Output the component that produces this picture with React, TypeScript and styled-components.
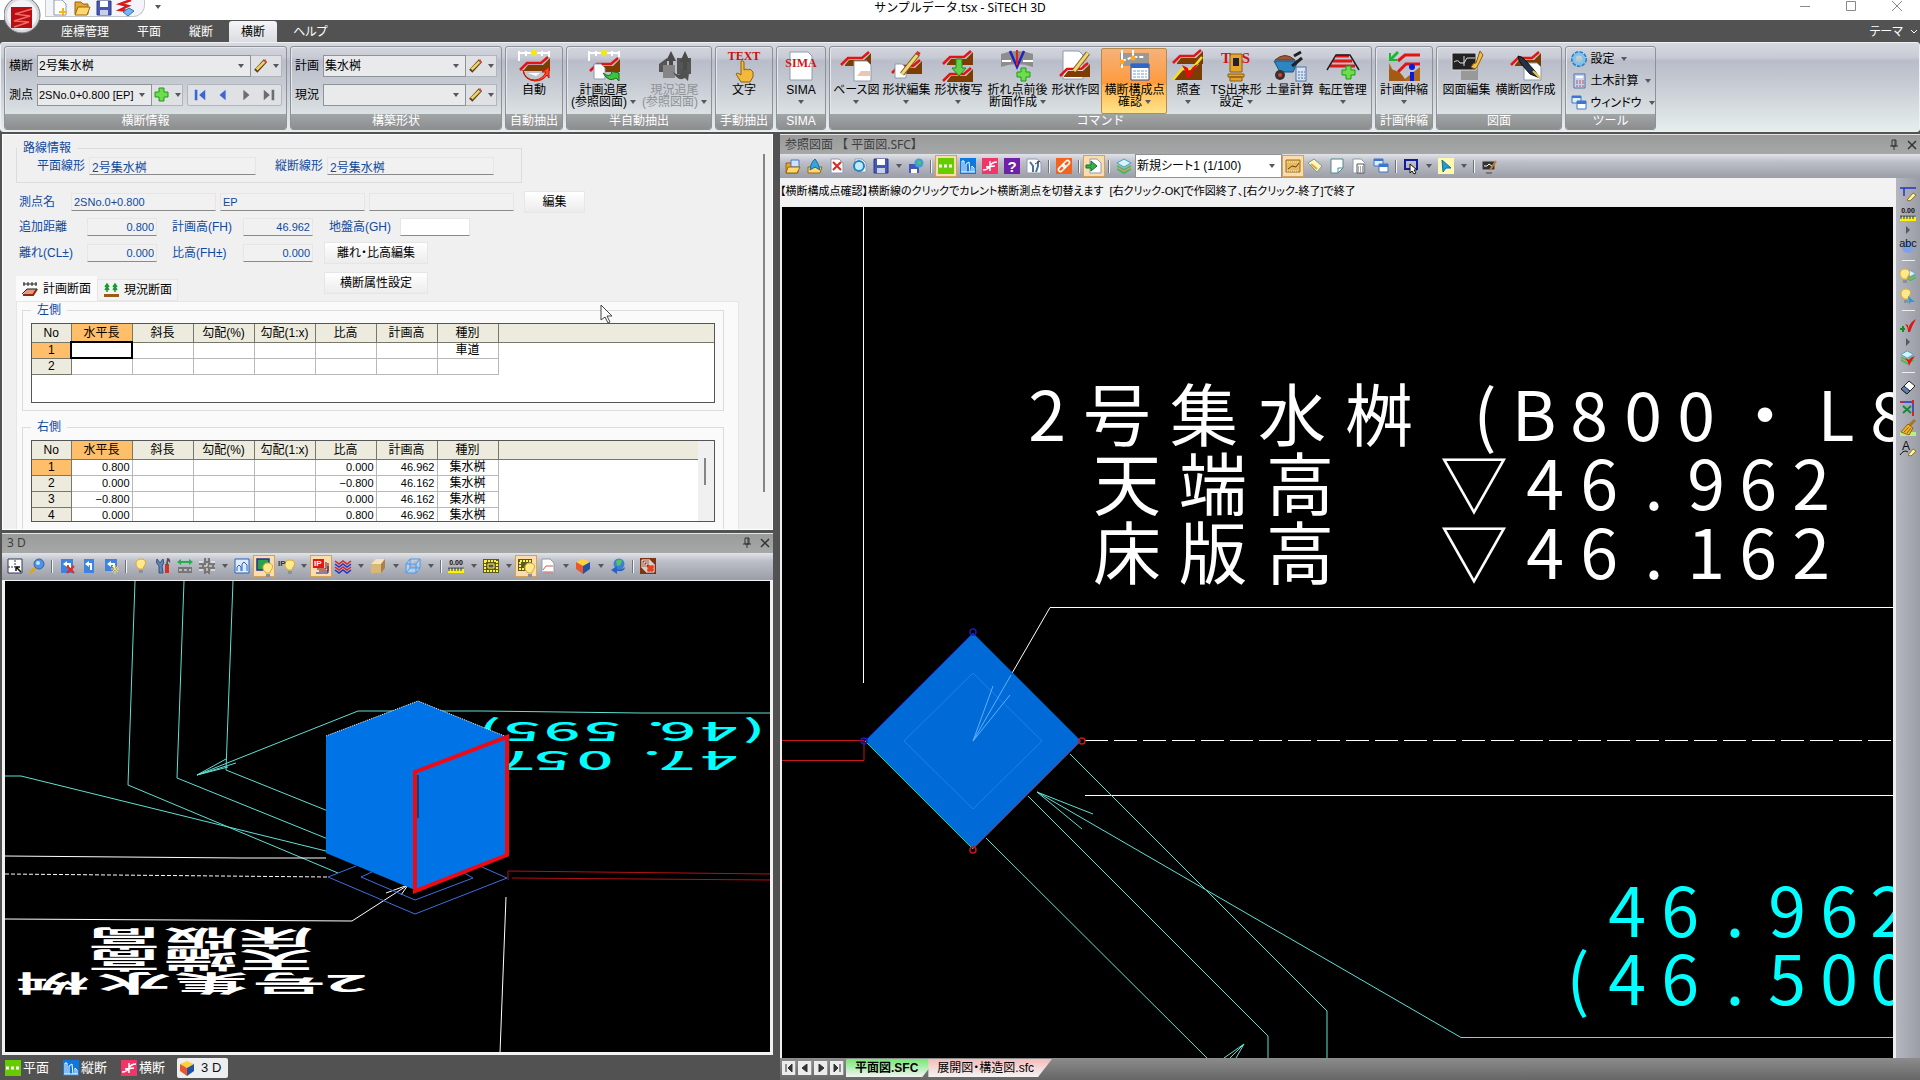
import React from "react";
import styled, { createGlobalStyle, css } from "styled-components";

const Global = createGlobalStyle`
  * { box-sizing: border-box; }
  body {
    margin: 0;
    background: #525252;
    color: #000;
    font: 12px/16px "Liberation Sans", "Noto Sans CJK JP", sans-serif;
    font-feature-settings: "palt";
  }
  button, select, input { font: inherit; font-feature-settings: inherit; color: inherit; }
  button { border: 0; padding: 0; background: none; white-space: nowrap; }
  svg { display: block; flex: none; }
`;

/* ---------- icons ---------- */

const bands = (x: number, y: number, fill = "#7d3c00") => (
  <g transform={`translate(${x} ${y})`}>
    <path d="M5 12 L9 7 H24 L31 0 V13 H5Z" fill={fill} />
    <path d="M1 12 L8 5 H22 L29 -1" fill="none" stroke="#e31414" strokeWidth="2.5" />
  </g>
);
const page = (x: number, y: number, w = 12, h = 14) => (
  <path d={`M${x} ${y}h${w - 4}l4 4v${h - 4}h-${w}z`} fill="#fff" stroke="#8c9bb0" strokeWidth="1" />
);
const plus = (x: number, y: number) => (
  <path d={`M${x + 4} ${y}h5v4h4v5h-4v4h-5v-4h-4v-5h4z`} fill="#6fdc4c" stroke="#1d9a1d" />
);
const ruler = (
  <g>
    <path d="M1 1v10M1 3h30M8 1v5M24 1v5M31 1v6" stroke="#fff" strokeWidth="2" fill="none" />
    <path d="M13 3h6M16 0v6" stroke="#f7ea00" strokeWidth="3" />
  </g>
);
const pencilLine = (a: string) => (
  <g>
    <path d={a} stroke="#7a5a10" strokeWidth="5" />
    <path d={a} stroke="#f3d579" strokeWidth="3" />
  </g>
);

const big: Record<string, React.ReactNode> = {
  auto: <>{ruler}{bands(1, 8)}<path d="M5 20q2 10 12 10 8-1 11-8l-4 0 7-5v11l-2-3q-4 6-12 6-11-1-12-11z" fill="#ff4a2a" stroke="#c81200" /><path d="M10 23h12l-4 3z" fill="#fff" /></>,
  trace: <>{ruler}{bands(1, 9)}{page(6, 14, 11, 15)}<path d="M15 23q6 5 9 0l-2-2 9 2 0 8-3-3q-7 5-13-5z" fill="#3fc43a" stroke="#14701c" /></>,
  traceOff: <><path d="M0 14l8-6v14H0zM18 8h14v16H18z" fill="#555" /><path d="M12 1l5 10h-3v9h-4v-9H7zM26 1l5 11h-3v8h-4v-8h-3z" fill="#4a4a4a" /><rect x="4" y="15" width="12" height="13" fill="#858585" /><path d="M14 22q7 5 9 0l-2-3 9 4-1 8-3-3q-7 4-12-6z" fill="#505050" /></>,
  text: <><text x="16" y="10" textAnchor="middle" fontFamily="Liberation Serif" fontWeight="700" fontSize="12" fill="#c81111">TEXT</text><path d="M13 11q2-1 3 1v8l2-1 2 1 2-1 2 2 1 1v5l-3 5H13l-5-8q1-2 5 1z" fill="#f2b93b" stroke="#91600c" /></>,
  sima: <>{page(5, 2, 22, 28)}<text x="16" y="17" textAnchor="middle" fontFamily="Liberation Serif" fontSize="12" fontWeight="700" fill="#d21616">SIMA</text></>,
  base: <>{bands(0, 3)}{page(14, 11, 17, 20)}<path d="M17 26l4-5h9v5z" fill="#e8c8b4" /></>,
  edit: <>{bands(1, 11)}{page(5, 14, 11, 14)}{pencilLine("M12 24L28 4")}<path d="M27 5l2-3" stroke="#c33" strokeWidth="4" /></>,
  copy: <>{bands(0, 2)}{bands(0, 19)}<path d="M14 9h6v9h4l-7 8-7-8h4z" fill="#5fd24a" stroke="#178f1b" /></>,
  fold: <><path d="M0 4q16-6 32 0v13q-16-6-32 0z" fill="#8d8d8d" /><path d="M1 11h9m12 0h10" stroke="#fff" strokeWidth="2" /><path d="M9 1l7 16 7-16" stroke="#2222bb" strokeWidth="2.5" fill="none" /><path d="M16 0v15" stroke="#d22" strokeWidth="2" />{plus(16, 18)}</>,
  draw: <>{page(4, 1, 20, 28)}{bands(0, 14)}{pencilLine("M15 21L29 3")}</>,
  check: <><path d="M2 3h29v13H2z" fill="#999" /><path d="M4 0v18M15 0v10" stroke="#fff" strokeWidth="2" /><path d="M4 11l11-4 12 0" stroke="#fff" strokeWidth="2" strokeDasharray="4 2" /><circle cx="4" cy="12" r="2.5" fill="#ffa51e" /><circle cx="15" cy="8" r="2.5" fill="#ffa51e" /><path d="M13 14h18v16H13z" fill="#fff" stroke="#2653a6" /><path d="M13 14h18v4H13z" fill="#2e67c8" /><path d="M15 21h14M15 24h14M15 27h14" stroke="#7e9cc8" strokeDasharray="3 1" /></>,
  audit: <>{bands(0, 1)}<path d="M1 30l10-10h10l9-9v19z" fill="#7d3c00" /><path d="M1 30l9-11h10l10-12" stroke="#f2e21a" strokeWidth="2.5" fill="none" /><path d="M10 15l6 3 1 5q3-7 9-9q-5 6-8 14h-3q-1-7-5-13z" fill="#e60c0c" /></>,
  ts: <><path d="M10 4h12v18H10zM8 24h16v3H8zM10 27h12v4H10z" fill="#e5a52c" stroke="#8c5a10" /><rect x="13" y="8" width="6" height="8" fill="#223" /><g fontFamily="Liberation Serif" fontWeight="700" fontSize="15" textAnchor="middle" fill="#d21616"><text x="6 26" y="13">TS</text></g></>,
  barrow: <><path d="M1 10q10-9 20 0z" fill="#9b5632" stroke="#6d381b" /><path d="M0 11h24l-5 11H6z" fill="#2d86c4" stroke="#15517d" /><path d="M18 16L28 8M20 6l7-4" stroke="#222" strokeWidth="3" /><circle cx="6" cy="25" r="5" fill="#333" /><circle cx="6" cy="25" r="2" fill="#e04020" /><rect x="22" y="17" width="10" height="14" fill="#d7e3f5" stroke="#51719f" /><path d="M24 22h7M24 25h7M24 28h7" stroke="#51719f" strokeDasharray="2 1" /></>,
  roll: <><path d="M9 6h13M6 11h19M3 16h25" stroke="#e31414" strokeWidth="3" /><path d="M0 20L9 5h14l9 15" fill="none" stroke="#222" strokeWidth="1.5" />{plus(15, 16)}</>,
  stretch: <><path d="M1 13v18h10zM14 31l18-14v14z" fill="#b06a20" /><path d="M1 19q12 1 17 12H1z" fill="#a35a12" /><path d="M10 11l7-6h15M10 22l8-8h14" fill="none" stroke="#e31414" strokeWidth="3" /><path d="M9 1L3 7V3H1v8h8V9H5l6-6z" fill="#19b82c" /><circle cx="24" cy="17" r="3" fill="#0a18e0" /><path d="M22 22h4v9h-4z" fill="#0a18e0" /></>,
  dwg: <><path d="M10 17h17v13H10z" fill="#999" /><path d="M1 3h24v17H1z" fill="#222" stroke="#ddd" /><path d="M3 12q4-3 6 1h4l3-5h8M13 6v10" stroke="#ddd" fill="none" /><path d="M20 17q3-5 5-4l4-12 3 4-5 10q-2 6-7 2z" fill="#f0c043" stroke="#90581b" /></>,
  section: <>{bands(0, 3)}{page(14, 13, 17, 17)}<path d="M8 6q4 0 8 5l8 9 6 8-10-4-8-9q-4-5-4-9z" fill="#25334a" stroke="#111" /><path d="M23 21l7 7" stroke="#f3cf3c" strokeWidth="2" /></>,
};

const curveTile = (bg: string, body: React.ReactNode) => <><rect width="16" height="16" fill={bg} />{body}</>;
const bulb = (x = 0, y = 0) => (
  <g transform={`translate(${x} ${y})`}>
    <path d="M5 11Q1 8 2 4Q4 0 8 1Q13 2 11 7Q9 9 9 11z" fill="#ffe98a" stroke="#d9a930" />
    <path d="M5 12h4v3H5z" fill="#8b8fa0" />
  </g>
);
const sheets = (c: string) => <><path d="M1 5l7-4 7 4-7 4z" fill="#d8f3fa" stroke={c} /><path d="M1 8l7 4 7-4M1 11l7 4 7-4" fill="none" stroke="#45b86b" strokeWidth="2" /><path d="M1 9l7 4 7-4" fill="none" stroke="#e0a33a" /></>;
const tinyText = (t: string, y: number, size = 8, fill = "#111") => (
  <text x="8" y={y} textAnchor="middle" fontSize={size} fontWeight="700" fontFamily="Liberation Sans" fill={fill}>{t}</text>
);

const small: Record<string, React.ReactNode> = {
  fit: <><path d="M1 1h14v14H1z" fill="#fff" stroke="#333a55" /><path d="M1 9h7V1" stroke="#333a55" strokeDasharray="2 1" fill="none" /><path d="M14 14l-5-5m0 4V9h4" stroke="#111" strokeWidth="1.5" fill="none" /></>,
  zoom: <><path d="M1 15l6-6" stroke="#dba520" strokeWidth="3" /><circle cx="10" cy="6" r="5" fill="#4b93e6" stroke="#3863a5" /><circle cx="9" cy="5" r="2" fill="#c4e2ff" /></>,
  undoX: <><path d="M2 1h12v14H2z" fill="#3e83dd" /><path d="M4 6l4-3v2h4v5h-2V7H8v2z" fill="#fff" /><path d="M8 8l7 7m0-7l-7 7" stroke="#e42b20" strokeWidth="2" /></>,
  undo: <><path d="M3 1h10v14H3z" fill="#3e83dd" /><path d="M4 6l4-3v2h3v7H9V7H8v2z" fill="#fff" /></>,
  undoStar: <><path d="M2 1h12v12H2z" fill="#3e83dd" /><path d="M4 6l4-3v2h4v5h-2V7H8v2z" fill="#fff" /><path d="M12 7v9M8 11h8M9 8l6 6m0-6l-6 6" stroke="#ffd95a" /></>,
  bulb: bulb(1, 0),
  tools: <><path d="M2 1l3 4 3-4q2 4-1 7l1 7H4L4 8Q0 5 2 1z" fill="#5f86b8" stroke="#34547c" /><path d="M10 6h4v9h-4z" fill="#d2322a" /><path d="M12 0q4 0 3 5l-2-2v4h-2z" fill="#555" /></>,
  width: <><path d="M0 4l4-3v2h8V1l4 3-4 3V5H4v2z" fill="#21b04b" /><path d="M1 9h14v6H1z" fill="#777" /><path d="M2 12h12" stroke="#fff" strokeDasharray="3 2" /></>,
  cross: <><path d="M5 0h6v16H5zM0 5h16v6H0z" fill="#777" /><path d="M8 0v16M0 8h16" stroke="#fff" strokeDasharray="3 2" /><path d="M0 4h4M12 4h4M0 12h4M12 12h4" stroke="#fff" /></>,
  house: <><path d="M1 1h14v14H1z" fill="#dcebff" stroke="#2b63b8" /><path d="M3 13V9l2-2 2 2v4M8 13V6l2-2 3 3v6" stroke="#2b63b8" fill="none" /></>,
  layerBulb: <><path d="M1 1h12v11H1z" fill="#2aa14a" stroke="#1d2f8f" strokeWidth="1.5" />{bulb(5, 4)}</>,
  ipBulb: <>{bulb(5, 1)}<text x="0" y="8" fontSize="8" fontWeight="700" fill="#333">IP</text></>,
  ipRed: <><path d="M6 13h9V5M4 11h9V4" stroke="#7a1010" fill="none" /><path d="M0 1h11v9H0z" fill="#e41616" /><path d="M3 15h12V8" stroke="#1522aa" fill="none" /><text x="1" y="8" fontSize="8" fontWeight="700" fill="#fff">IP</text></>,
  waves: <><path d="M0 3l4 3 4-3 4 3 4-3M0 9l4 3 4-3 4 3 4-3" stroke="#d22" fill="none" strokeWidth="1.5" /><path d="M0 6l4 3 4-3 4 3 4-3M0 12l4 3 4-3 4 3 4-3" stroke="#2233cc" fill="none" strokeWidth="1.5" /></>,
  box: <><path d="M1 6l5-5h9l-4 5z" fill="#f4e2b8" /><path d="M1 6h10v9H1z" fill="#d9b876" /><path d="M11 6l4-5v9l-4 5z" fill="#a8824a" /></>,
  wire: <path d="M1 6l4-5h10v9l-4 5H1zM1 6h10l4-5M11 6v9M5 1v9h10M5 10l-4 5" fill="#bfe0ff" fillOpacity=".6" stroke="#4a9be8" />,
  dim: <>{tinyText("0.00", 7, 7)}<path d="M0 9h16v6H0z" fill="#fff200" /><path d="M0 10h16M1 10v3m3-3v3m3-3v3m3-3v3m3-3v3" stroke="#1c2ba0" /></>,
  film: <><path d="M0 1h16v14H0z" fill="#5a5a28" /><path d="M2 3h12v10H2z" fill="none" stroke="#fff23a" strokeDasharray="2 1" strokeWidth="2" /><path d="M5 6h6v4H5z" fill="#555" stroke="#fff23a" /></>,
  filmBulb: <><path d="M0 1h14v12H0z" fill="#5a5a28" /><path d="M2 3h10v8H2z" fill="none" stroke="#fff23a" strokeDasharray="2 1" strokeWidth="2" />{bulb(5, 4)}</>,
  sheetRed: <>{page(2, 1, 12, 14)}<path d="M3 12l3-4h7M3 14h10" stroke="#cf5a4a" fill="none" /></>,
  cube: <><path d="M1 4l7-3 7 3-7 4z" fill="#ffd23c" /><path d="M1 4l7 4v8l-7-5z" fill="#e8582c" /><path d="M15 4L8 8v8l7-5z" fill="#2353a8" /></>,
  globe: <><circle cx="9" cy="6" r="5.5" fill="#3f7fd6" /><path d="M6 3q4-3 6 0-1 5-5 5z" fill="#4fc65b" /><path d="M15 9q0 5-8 4v3l-6-4 6-4v3q5 1 8-2z" fill="#2a63c8" /></>,
  stackX: <><path d="M0 0h16v16H0z" fill="#7c3412" /><path d="M2 2h8v8H2zM4 4h8v8H4zM6 6h8v8H6z" fill="#7c3412" stroke="#fff" /><path d="M8 8l5 5m0-5l-5 5" stroke="#f03a20" strokeWidth="3" /></>,
  folder: <><path d="M1 5h5l1 2h6v8H1z" fill="#e5a52e" stroke="#976711" /><path d="M6 2h8v7H6z" fill="#cfe2ff" stroke="#4a79bd" /><path d="M3 9h12l-3 6H1z" fill="#ffd970" stroke="#976711" /></>,
  folderUp: <><path d="M1 9h14l-2 6H1z" fill="#ffd970" stroke="#976711" /><path d="M3 12q1-8 5-11 3 3 5 11l-5-3z" fill="#35a5dc" stroke="#176b9c" /></>,
  docX: <>{page(2, 1, 12, 14)}<path d="M4 4l8 8m0-8l-8 8" stroke="#e0261c" strokeWidth="2" /></>,
  docZoom: <>{page(4, 1, 11, 13)}<circle cx="8" cy="8" r="5" fill="#bfeaff" stroke="#2383bd" strokeWidth="2" /></>,
  save: <><path d="M1 1h14v14H1z" fill="#4658b5" stroke="#2c3a86" /><path d="M4 1h8v6H4z" fill="#fff" /><path d="M4 10h8v5H4z" fill="#c9cfe8" /></>,
  saveWeb: <><path d="M1 6h10v9H1z" fill="#4658b5" /><path d="M3 11h6v4H3z" fill="#fff" /><circle cx="11" cy="5" r="4.5" fill="#3f9fd6" /><path d="M9 3q4-2 4 3l-3 1z" fill="#4fc65b" /></>,
  plan: curveTile("#66cc00", <path d="M1 8h14" stroke="#fff" strokeWidth="3" strokeDasharray="3 2" />),
  profile: curveTile("#0c78e0", <path d="M1 14h14M2 14V3h2v11M6 14V6l3-2 1 10M12 14V8l2 2v4" stroke="#fff" fill="none" />),
  xsec: curveTile("#f23568", <path d="M1 12q5 0 7-4t7-4M8 3v10M4 9l9-1" stroke="#fff" fill="none" strokeWidth="1.5" />),
  help: curveTile("#6f1fa8", tinyText("?", 14, 15, "#fff")),
  toolDoc: <>{page(1, 1, 14, 14)}<path d="M4 4l3 4v6M12 3v5l-2 6" stroke="#4a6fa3" strokeWidth="2" fill="none" /><path d="M9 6l5-3" stroke="#444" /></>,
  link: curveTile("#f4631e", <g transform="rotate(-45 8 8)" stroke="#fff" strokeWidth="1.5"><rect x="1" y="6" width="8" height="4" rx="2" /><rect x="7" y="6" width="8" height="4" rx="2" /></g>),
  docIn: <>{page(4, 1, 11, 14)}<path d="M0 7h5V3l6 5-6 5v-3H0z" fill="#30b34a" stroke="#15702a" /></>,
  layers: sheets("#3ba4c6"),
  grid: <><path d="M1 2h14v12H1z" fill="#e8b85a" stroke="#8f7232" /><path d="M3 11l4-3 4 1 3-4" stroke="#5b4a1a" fill="none" /><path d="M2 4h12M2 13h12" stroke="#fff6c0" strokeDasharray="1 1" /></>,
  note: <><path d="M1 5l6-4 8 7-5 6z" fill="#fff7bd" stroke="#7a9c80" /><path d="M4 6l6 5" stroke="#e0a33a" strokeWidth="2" /></>,
  sheet: <path d="M2 1h12v9l-5 5H2zM9 15v-5h5" fill="#fff" stroke="#4e8a8a" />,
  calcDoc: <>{page(2, 1, 12, 14)}<path d="M6 6h7v9H6z" fill="#fff" stroke="#555" /><path d="M7 9h5M7 11h5M7 13h5" stroke="#555" strokeDasharray="1 1" /></>,
  windows: <><path d="M1 1h9v7H1z" fill="#dfeeff" stroke="#3b77cc" /><path d="M6 6h9v8H6z" fill="#fff" stroke="#3b77cc" /><path d="M1 1h9v2H1zM6 6h9v3H6z" fill="#3b77cc" /></>,
  select: <><path d="M2 2h12v9H2z" fill="none" stroke="#101c9c" strokeWidth="2" /><path d="M7 6v9l2-2 2 3 2-1-2-3h3z" fill="#fff" stroke="#111" /></>,
  pick: <><path d="M0 0h16v16H0z" fill="#fff9b0" /><path d="M4 2l9 8H8l-3 4z" fill="#1f9ddb" stroke="#146b9c" /></>,
  board: <><path d="M1 3h13v9H1z" fill="#333" stroke="#bbb" /><path d="M3 8h3l2-2 4 3" stroke="#fff" fill="none" /><path d="M9 12l6-9" stroke="#c57a32" strokeWidth="2" /><path d="M5 15h6" stroke="#777" strokeWidth="2" /></>,
  linePen: <><path d="M0 2h16M4 2v8" stroke="#2033c8" strokeWidth="1.5" /><path d="M7 14l6-7 3 2-6 6z" fill="#fff3a0" stroke="#8c7420" /></>,
  abc: <><circle cx="8" cy="9" r="6" fill="#7da2e6" /><text x="8" y="9" textAnchor="middle" fontSize="11" fill="#111">abc</text></>,
  bulbLayers: <><g transform="translate(5 2) scale(.7)">{sheets("#3ba4c6")}</g>{bulb(-2, 0)}</>,
  bulbPick: <>{bulb(-1, 0)}<path d="M8 8l7 6h-4l-2 2z" fill="#2b9bd6" /></>,
  checkPlus: <><path d="M5 6l3 1 0 4q2-7 8-10-4 7-6 13H8q0-5-3-8z" fill="#e31414" /><path d="M0 11h5M3 8v6" stroke="#178f1b" strokeWidth="2" /></>,
  checkLayers: <><g transform="scale(.9)">{sheets("#3ba4c6")}</g><path d="M5 8l4 2q2-3 6-4-4 5-6 10Q8 11 5 8z" fill="#e31414" /></>,
  eraser: <><path d="M1 9l8-8 6 5-8 8z" fill="#fff" stroke="#222" /><path d="M4 6l6 5-3 3-6-5z" fill="#5c7fb0" stroke="#222" /></>,
  cut: <><path d="M0 2h13v12" stroke="#2033c8" fill="none" strokeWidth="1.5" /><path d="M3 6l8 7m0-7l-8 7" stroke="#158a34" strokeWidth="2" /><path d="M0 2h3m10-2v4m0 8v4" stroke="#d22" strokeWidth="2" /></>,
  broom: <><path d="M0 12h16v4H0z" fill="#b5f088" /><path d="M15 0L9 6" stroke="#a87622" strokeWidth="3" /><path d="M8 4l5 4-4 7-8-3z" fill="#f4b327" stroke="#8d6312" /><path d="M4 12l5-5M7 13l4-5" stroke="#8d6312" /></>,
  letterPen: <><text x="6" y="10" textAnchor="middle" fontSize="12" fill="#111">A</text><path d="M0 15q4-6 8-3" stroke="#111" fill="none" /><path d="M8 15l5-6 3 2-5 5z" fill="#fff3a0" stroke="#8c7420" /></>,
  pencil: <><path d="M2 14L13 2" stroke="#5b431a" strokeWidth="5" /><path d="M3 12L12 3" stroke="#f0cf63" strokeWidth="3" /><path d="M12 3l2-1" stroke="#c5504a" strokeWidth="4" /></>,
  plus: <g transform="translate(1 1)">{plus(0, 0)}</g>,
  first: <><path d="M2 2h3v12H2zM14 2v12L7 8z" fill="#3a68d0" /></>,
  prev: <path d="M11 2v12L4 8z" fill="#3a68d0" />,
  next: <path d="M5 2v12l7-6z" fill="#6a6d72" />,
  last: <path d="M2 2v12l7-6zM11 2h3v12h-3z" fill="#6a6d72" />,
  gear: <><circle cx="8" cy="8" r="6" fill="none" stroke="#2d7fc0" strokeWidth="4" strokeDasharray="3 1" /><circle cx="8" cy="8" r="5" fill="none" stroke="#7cc4ee" strokeWidth="3" /></>,
  calc: <><path d="M3 1h11v14H3z" fill="#c4d5f2" stroke="#5172ab" /><path d="M5 3h7v2H5z" fill="#fff" /><path d="M5 8h8M5 10h8M5 13h8" stroke="#c05050" strokeDasharray="2 1" /></>,
  newDoc: <>{page(2, 0, 12, 15)}<path d="M11 8v8M7 12h8" stroke="#f6b31d" strokeWidth="2" /></>,
  open: <><path d="M1 2h6l2 2h5v10H1z" fill="#e5a52e" stroke="#976711" /><path d="M4 7h12l-3 8H1z" fill="#ffd970" stroke="#976711" /></>,
  logo: <><path d="M13 0L2 4l8 2-8 4 9 1" stroke="#d81c1c" strokeWidth="2.5" fill="none" /><path d="M5 12l6-4 5 3-6 5z" fill="#78b7f0" stroke="#3170b8" /></>,
  tabPlan: <><path d="M4 8h12l-4 6H1z" fill="#e8977c" /><path d="M1 3h14M2 1v4m4-4v4m4-4v4m4-4v4" stroke="#222" fill="none" /><path d="M0 13l5-5h10" stroke="#222" fill="none" /><path d="M1 14h10l4-6" stroke="#8a2a12" strokeWidth="2" fill="none" /></>,
  tabNow: <><path d="M1 12h15v3H1z" fill="#9a5a18" /><path d="M4 10V3m-2 2l2-3 2 3M2 8l2-3 2 3M12 10V3m-2 2l2-3 2 3m-4 3l2-3 2 3" stroke="#159a2c" fill="none" strokeWidth="1.5" /></>,
};

const Icon = ({ name, size = 16 }: { name: string; size?: number }) => (
  <svg width={size} height={size} viewBox={size === 32 ? "0 0 32 32" : "0 0 16 16"} fill="none" overflow="visible" aria-hidden="true">
    {size === 32 ? big[name] : small[name]}
  </svg>
);
const Arrow = () => (
  <svg width="6" height="4" viewBox="0 0 6 4" aria-hidden="true"><path d="M0 0h6L3 4z" fill="#55585e" /></svg>
);
const Pin = () => (
  <svg width="10" height="12" viewBox="0 0 10 12" aria-hidden="true"><path d="M3 1h4v6H3zM1 7h8M5 7v4M6 1v6" fill="none" stroke="#333" /></svg>
);
const Cross = () => (
  <svg width="10" height="10" viewBox="0 0 10 10" aria-hidden="true"><path d="M1 1l8 8M9 1l-8 8" stroke="#333" strokeWidth="1.5" /></svg>
);

/* ---------- window frame ---------- */

const Window = styled.div`
  position: relative;
  display: flex;
  flex-direction: column;
  height: 100vh;
  overflow: hidden;
`;
const TitleBar = styled.header`
  display: grid;
  grid-template-columns: 1fr auto 1fr;
  height: 20px;
  background: #fff;
`;
const QuickBar = styled.div`
  display: flex;
  align-items: flex-start;
  gap: 10px;
  padding-left: 45px;
`;
const QuickPill = styled.div`
  display: flex;
  align-items: flex-start;
  gap: 6px;
  height: 17px;
  padding: 0 10px 0 6px;
  border: 1px solid #c3c7cf;
  border-top: 0;
  border-radius: 0 0 12px 0;
  background: #f4f5f8;
`;
const QuickMore = styled.button`
  padding-top: 5px;
`;
const Title = styled.h1`
  margin: 0;
  font: 12px/16px "Noto Sans", "Noto Sans CJK JP", sans-serif;
`;
const WinControls = styled.div`
  display: flex;
  justify-content: flex-end;
  gap: 34px;
  padding-right: 17px;
  button { height: 12px; }
`;
const Orb = styled.button`
  position: absolute;
  left: 4px;
  top: -3px;
  width: 37px;
  height: 37px;
  border-radius: 50%;
`;
const MenuBar = styled.nav`
  display: flex;
  align-items: flex-end;
  gap: 4px;
  height: 22px;
  padding-left: 49px;
  background: #525252;
`;
const MenuTab = styled.button<{ $active?: boolean }>`
  height: 21px;
  padding: 0 12px;
  color: #fff;
  ${(p) => p.$active && css`
    color: #000;
    border-radius: 3px 3px 0 0;
    background: linear-gradient(#f4f5f7, #d9dce2);
  `}
`;
const ThemeButton = styled(MenuTab)`
  display: flex;
  align-items: center;
  gap: 8px;
  margin-left: auto;
  padding-right: 3px;
`;

/* ---------- ribbon ---------- */

const Ribbon = styled.div`
  display: flex;
  gap: 3px;
  height: 90px;
  margin: 0 0 2px;
  padding: 3px 3px 1px;
  border: 1px solid #eef0f2;
  border-radius: 3px;
  background: linear-gradient(#d6d9df 0, #c9ccd6 14px, #b9bdca 18px, #c6cad2 40px, #e6eeed 88px);
`;
const GroupBox = styled.section<{ $w: number }>`
  display: flex;
  flex-direction: column;
  flex: 0 0 ${(p) => p.$w}px;
  border: 1px solid #8e9298;
  border-radius: 3px;
  box-shadow: inset 1px 1px 0 #e4e7ec;
  overflow: hidden;
`;
const GroupBody = styled.div`
  display: flex;
  flex: 1;
  justify-content: center;
  gap: 1px;
  padding: 1px 1px 0;
`;
const GroupName = styled.h2`
  margin: 0;
  height: 15px;
  background: linear-gradient(#a2a5a6, #8c8e8e);
  color: #fff;
  font: 12px/14px "Liberation Sans", "Noto Sans CJK JP", sans-serif;
  text-align: center;
`;
const CommandButton = styled.button<{ $w: number; $active?: boolean }>`
  display: flex;
  flex-direction: column;
  align-items: center;
  flex: 0 0 ${(p) => p.$w}px;
  padding-top: 1px;
  border: 1px solid transparent;
  border-radius: 2px;
  line-height: 12px;
  &:disabled { color: #8e9196; }
  ${(p) => p.$active && css`
    border-color: #b58a4c;
    background: linear-gradient(#f6b27a, #ff9a3c 35px, #ffb450 36px, #ffe487);
  `}
`;
const CommandLabel = styled.span`
  display: flex;
  flex-direction: column;
  align-items: center;
  margin-top: 2px;
`;
const CommandLine = styled.span`
  display: flex;
  align-items: center;
  justify-content: center;
  gap: 3px;
  height: 12px;
`;
const FieldStack = styled.div`
  display: flex;
  flex: 1;
  flex-direction: column;
  gap: 7px;
  padding: 7px 3px 0;
`;
const FieldLine = styled.div`
  display: flex;
  align-items: center;
  height: 22px;
`;
const FieldLabel = styled.label`
  flex: 0 0 28px;
`;
const Combo = styled.span<{ $light?: boolean; $fixed?: number; $small?: boolean }>`
  display: grid;
  grid-template-columns: minmax(0, 1fr) 18px;
  align-items: center;
  flex: ${(p) => (p.$fixed ? `0 0 ${p.$fixed}px` : "1")};
  height: 100%;
  border: 1px solid #8f9398;
  background: ${(p) => (p.$light ? "#fff" : "#e9eaec")};
  font-size: ${(p) => (p.$small ? 11 : 12)}px;
  select {
    grid-area: 1 / 1 / 2 / 3;
    height: 100%;
    min-width: 0;
    padding: 0 0 0 1px;
    border: 0;
    background: none;
    appearance: none;
  }
  svg { grid-area: 1 / 2 / 2 / 3; justify-self: center; pointer-events: none; }
`;
const SplitButton = styled.button`
  display: flex;
  align-items: center;
  justify-content: center;
  gap: 5px;
  flex: 0 0 31px;
  height: 100%;
  border: 1px solid #b2b5bb;
  border-left: 0;
  background: #dfe1e5;
`;
const NavStrip = styled.div`
  display: flex;
  flex: 1;
  height: 100%;
  margin-left: 4px;
  border: 1px solid #b2b5bb;
  border-radius: 2px;
  background: #dfe1e5;
  button { display: flex; flex: 1; align-items: center; justify-content: center; }
`;
const ToolList = styled.div`
  display: flex;
  flex: 1;
  flex-direction: column;
  gap: 6px;
  padding: 3px 0 0 5px;
  button { display: flex; align-items: center; gap: 3px; height: 16px; }
  svg:last-child { margin-left: 4px; }
`;

type Cmd = { icon: string; w: number; l1: string; l2?: string; menu?: boolean; active?: boolean; off?: boolean };
const Command = ({ icon, w, l1, l2, menu, active, off }: Cmd) => (
  <CommandButton $w={w} $active={active} disabled={off}>
    <Icon name={icon} size={32} />
    <CommandLabel>
      <CommandLine>{l1}</CommandLine>
      <CommandLine>{l2}{menu && <Arrow />}</CommandLine>
    </CommandLabel>
  </CommandButton>
);
const groups: { name: string; w: number; items: Cmd[] }[] = [
  { name: "自動抽出", w: 58, items: [{ icon: "auto", w: 50, l1: "自動" }] },
  { name: "半自動抽出", w: 146, items: [
    { icon: "trace", w: 70, l1: "計画追尾", l2: "(参照図面)", menu: true },
    { icon: "traceOff", w: 70, l1: "現況追尾", l2: "(参照図面)", menu: true, off: true }] },
  { name: "手動抽出", w: 58, items: [{ icon: "text", w: 50, l1: "文字" }] },
  { name: "SIMA", w: 50, items: [{ icon: "sima", w: 44, l1: "SIMA", menu: true }] },
  { name: "コマンド", w: 543, items: [
    { icon: "base", w: 48, l1: "ベース図", menu: true },
    { icon: "edit", w: 50, l1: "形状編集", menu: true },
    { icon: "copy", w: 52, l1: "形状複写", menu: true },
    { icon: "fold", w: 64, l1: "折れ点前後", l2: "断面作成", menu: true },
    { icon: "draw", w: 50, l1: "形状作図" },
    { icon: "check", w: 66, l1: "横断構成点", l2: "確認", menu: true, active: true },
    { icon: "audit", w: 40, l1: "照査", menu: true },
    { icon: "ts", w: 52, l1: "TS出来形", l2: "設定", menu: true },
    { icon: "barrow", w: 52, l1: "土量計算" },
    { icon: "roll", w: 52, l1: "転圧管理", menu: true }] },
  { name: "計画伸縮", w: 58, items: [{ icon: "stretch", w: 52, l1: "計画伸縮", menu: true }] },
  { name: "図面", w: 126, items: [
    { icon: "dwg", w: 52, l1: "図面編集" },
    { icon: "section", w: 64, l1: "横断図作成" }] },
];

/* ---------- docked panes ---------- */

const Workspace = styled.main`
  display: grid;
  grid-template-columns: minmax(0, 155fr) minmax(0, 228fr);
  gap: 5px;
  flex: 1;
  min-height: 0;
`;
const LeftColumn = styled.div`
  display: grid;
  grid-template-rows: minmax(0, 396fr) minmax(0, 523fr) 22px;
  gap: 3px 0;
  min-height: 0;
`;
const RightColumn = styled.section`
  display: flex;
  flex-direction: column;
  min-width: 0;
  min-height: 0;
`;
const PaneHead = styled.div`
  display: flex;
  align-items: center;
  gap: 8px;
  flex: 0 0 20px;
  height: 20px;
  padding: 0 3px 0 5px;
  border-top: 1px solid #e4e4e4;
  background: linear-gradient(#9a9c9b, #a6a8a7);
  color: #3c3e40;
  h2 { margin: 0; flex: 1; font: 12px/18px "Noto Sans", "Noto Sans CJK JP", sans-serif; }
`;
const Toolbar = styled.div<{ $h: number }>`
  display: flex;
  align-items: center;
  flex: 0 0 ${(p) => p.$h}px;
  padding: 0 2px;
  background: linear-gradient(#e2e3e9, #bcbfc8 8px, #9b9ea7);
`;
const ToolButton = styled.button<{ $active?: boolean }>`
  display: flex;
  align-items: center;
  justify-content: center;
  flex: 0 0 22px;
  height: 22px;
  ${(p) => p.$active && css`
    border: 1px solid #d3a25c;
    background: #fbdcae;
  `}
`;
const MenuArrow = styled.button`
  display: flex;
  align-items: center;
  justify-content: center;
  flex: 0 0 13px;
  height: 22px;
`;
const Divider = styled.span`
  flex: 0 0 2px;
  height: 13px;
  margin: 0 3px;
  border-left: 1px solid #6f727a;
  background: #f2f3f5;
`;
/* "!" marks a pressed tool, "v" a menu arrow, "|" a divider */
const Tools = ({ list }: { list: string }) => (
  <>
    {list.split(" ").map((t, i) =>
      t === "|" ? <Divider key={i} /> :
      t === "v" ? <MenuArrow key={i} aria-label="menu"><Arrow /></MenuArrow> :
      <ToolButton key={i} $active={t[0] === "!"} aria-label={t.replace("!", "")}><Icon name={t.replace("!", "")} /></ToolButton>
    )}
  </>
);

/* ---------- station form ---------- */

const FormPane = styled.section`
  position: relative;
  display: grid;
  grid-template-columns: minmax(0, 1fr) 7px;
  gap: 0 24px;
  min-height: 0;
  margin: 0 2px;
  padding: 5px 2px 0 13px;
  border: 1px solid #fff;
  background: #f0f0f0;
  color: #104a9c;
  overflow: hidden;
`;
const FormBody = styled.div`
  min-width: 0;
`;
const PaneScroll = styled.div`
  width: 2px;
  height: 338px;
  margin-top: 14px;
  background: #858585;
`;
const Fieldset = styled.fieldset<{ $w?: string; $pad: string }>`
  width: ${(p) => p.$w || "auto"};
  min-width: 0;
  margin: 0;
  padding: ${(p) => p.$pad};
  border: 1px solid #dcdcdc;
  legend { padding: 0 6px; line-height: 16px; }
`;
const FormLine = styled.div`
  display: flex;
  align-items: center;
`;
const RouteLine = styled(FormLine)`
  padding-left: 20px;
`;
const FormGrid = styled.div`
  display: grid;
  grid-template-columns: 68px 70px 15px 71px 70px 11px 76px 70px;
  grid-auto-rows: 26px;
  align-items: center;
  padding: 1px 0 0 3px;
`;
const Label = styled.label<{ $w?: number; $indent?: number }>`
  flex: 0 0 ${(p) => p.$w || 52}px;
  padding-left: ${(p) => p.$indent || 0}px;
  white-space: nowrap;
`;
const Field = styled.input<{ $w: number; $right?: boolean; $blank?: boolean }>`
  width: ${(p) => p.$w}px;
  height: 18px;
  padding: 0 2px;
  border: 1px solid #e6e6e6;
  border-bottom-color: #8a8a8a;
  border-radius: 0;
  background: ${(p) => (p.$blank ? "#fff" : "#f1f1f1")};
  font-size: ${(p) => (p.$right ? 11 : 12)}px;
  text-align: ${(p) => (p.$right ? "right" : "left")};
`;
const StationLine = styled(FormLine)`
  gap: 4px;
  margin-top: 8px;
  padding-left: 3px;
  input { font-size: 11px; }
  button { margin-left: 6px; }
`;
const PushButton = styled.button<{ $w: number }>`
  width: ${(p) => p.$w}px;
  height: 22px;
  border: 1px solid #e6e6e6;
  background: linear-gradient(#fff, #ececec);
  color: #000;
`;
const ButtonCell = styled.div`
  grid-column: 7 / 9;
`;
const TabLine = styled.div`
  display: flex;
  align-items: flex-start;
  justify-content: flex-start;
  height: 29px;
  margin-top: 6px;
`;
const TabList = styled.div`
  display: flex;
  align-items: flex-end;
  flex: 0 0 308px;
  height: 29px;
`;
const SheetTab = styled.button<{ $active?: boolean }>`
  display: flex;
  align-items: center;
  gap: 5px;
  height: ${(p) => (p.$active ? 25 : 22)}px;
  padding: 0 5px;
  border: 1px solid ${(p) => (p.$active ? "#fafafa" : "#e6e6e6")};
  background: ${(p) => (p.$active ? "#fafafa" : "#f3f3f3")};
  color: #000;
`;
const TabPage = styled.div`
  display: flex;
  flex-direction: column;
  gap: 8px;
  padding: 0 14px 8px 5px;
  border: 1px solid #e6e6e6;
  background: #fafafa;
`;
const GridFrame = styled.div<{ $h: number }>`
  display: flex;
  height: ${(p) => p.$h}px;
  border: 1px solid #555;
  background: #fff;
  overflow: hidden;
`;
const GridScroll = styled.div`
  flex: 0 0 16px;
  padding: 17px 6px 0;
  background: #f0f0f0;
  &::after { content: ""; display: block; width: 2px; height: 27px; background: #858585; }
`;
const Grid = styled.table`
  width: 100%;
  table-layout: fixed;
  border-collapse: collapse;
  align-self: flex-start;
  color: #000;
  th, td { height: 16px; padding: 0 2px; line-height: 14px; font-weight: 400; overflow: hidden; white-space: nowrap; }
  th { background: #ecebdd; border: 1px solid #77776a; text-align: center; }
  td { font-size: 11px; border: 1px solid #b8b8b8; text-align: right; }
  tr > :first-child { border-left: 0; }
  thead th { height: 18px; border-top: 0; padding: 0; }
  thead th:last-child { border-right: 0; }
  tbody td:last-child { border: 0; }
  tbody td:nth-last-child(2) { text-align: center; font-size: 12px; }
`;
const HotTh = styled.th`
  && { background: #ffbe69; }
`;
const CurrentTd = styled.td`
  outline: 2px solid #000;
  outline-offset: -1px;
`;

const heads = ["No", "水平長", "斜長", "勾配(%)", "勾配(1:x)", "比高", "計画高", "種別"];
const DataGrid = ({ rows, cursor, name }: { rows: string[][]; cursor?: boolean; name: string }) => (
  <Grid aria-label={name}>
    <colgroup>
      <col style={{ width: 39 }} />
      {heads.slice(1).map((h) => <col key={h} style={{ width: 61 }} />)}
      <col />
    </colgroup>
    <thead>
      <tr>
        {heads.map((h, i) => (i === 1 ? <HotTh key={h}>{h}</HotTh> : <th key={h}>{h}</th>))}
        <th />
      </tr>
    </thead>
    <tbody>
      {rows.map((r, i) => (
        <tr key={i}>
          {i === 0 ? <HotTh>1</HotTh> : <th>{i + 1}</th>}
          {r.map((c, j) => (cursor && i === 0 && j === 0 ? <CurrentTd key={j} /> : <td key={j}>{c}</td>))}
          <td />
        </tr>
      ))}
    </tbody>
  </Grid>
);
const leftRows = [["", "", "", "", "", "", "車道"], ["", "", "", "", "", "", ""]];
const rightRows = [
  ["0.800", "", "", "", "0.000", "46.962", "集水桝"],
  ["0.000", "", "", "", "−0.800", "46.162", "集水桝"],
  ["−0.800", "", "", "", "0.000", "46.162", "集水桝"],
  ["0.000", "", "", "", "0.800", "46.962", "集水桝"],
];
const Pointer = styled.svg`
  position: absolute;
  left: 597px;
  top: 169px;
`;

/* ---------- 3D view ---------- */

const ViewPane = styled.section`
  display: flex;
  flex-direction: column;
  min-height: 0;
  margin: 0 2px;
  background: #f2f2f2;
`;
const Stage = styled.div<{ $m: string }>`
  flex: 1;
  min-height: 0;
  margin: ${(p) => p.$m};
  background: #000;
  overflow: hidden;
  svg { width: 100%; height: 100%; font-family: "Noto Sans CJK JP", sans-serif; }
`;
const neg = (xs: number[]) => xs.map((x) => -x).join(" ");

const Scene3D = () => (
  <svg viewBox="5 581 765 472" preserveAspectRatio="xMinYMin slice" fill="none" strokeWidth="1" role="img" aria-label="3D">
    <g stroke="#5fe0d4">
      <path d="M135 581L128 785L338 873M184 581L177 778L328 839M233 581L226 770L328 811" />
      <path d="M5 776H21L326 851M770 713H640L483 711H358L197 775L226 759M197 775L236 763M197 775L228 767" />
    </g>
    <g stroke="#fff">
      <path d="M5 856L240 858H326M5 919L352 921L408 885M386 893L408 885L401 895M506 897L500 1053" />
      <path d="M5 874L328 877" strokeDasharray="4 2" />
    </g>
    <path d="M356 866L328 877L415 914L507 878L482 867M372 872L361 877L415 900L473 878L464 873" stroke="#3f6fe0" />
    <path d="M508 880V871L770 874M512 878L770 880" stroke="#b41016" />
    {/* ground labels lie flat and are seen from behind, so they run right to left */}
    <g fill="#00ffff" fontSize="64" fontWeight="500" textAnchor="middle">
      <text transform="translate(0 722) scale(-1 -0.4)" x={neg([754, 719, 678, 656, 602, 562, 522, 490])} y="0">(46.595)</text>
      <text transform="translate(0 751) scale(-1 -0.4)" x={neg([719, 677, 652, 595, 552, 517])} y="0">47.057</text>
    </g>
    <g fill="#fff" fontSize="74" fontWeight="700" textAnchor="middle">
      <text transform="translate(0 930) scale(-1 -0.3)" x={neg([276, 201, 124])} y="0">床版高</text>
      <text transform="translate(0 952) scale(-1 -0.3)" x={neg([276, 201, 124])} y="0">天端高</text>
      <text transform="translate(0 975) scale(-1 -0.3)" x={neg([346, 289, 211, 134, 53])} y="0">2号集水桝</text>
    </g>
    <path d="M418 701L507 737V855L415 890L326 853V736Z" fill="#0073e6" />
    <path d="M326 736L418 701L507 737" stroke="#fff" strokeDasharray="1 1" />
    <path d="M415 772L507 737V855L415 891Z" stroke="#ee0a14" strokeWidth="4" />
    <path d="M418 775V818" stroke="#0a1420" />
  </svg>
);
const ViewTabs = styled.nav`
  display: flex;
  align-items: center;
  gap: 10px;
  padding: 0 0 2px 3px;
`;
const ViewTab = styled.button<{ $active?: boolean }>`
  display: flex;
  align-items: center;
  gap: 2px;
  height: 20px;
  padding: 0 2px;
  color: #fff;
  font-size: 13px;
  ${(p) => p.$active && css`
    gap: 6px;
    padding: 0 7px 0 2px;
    border-radius: 2px;
    background: #eceef0;
    color: #111;
  `}
`;

/* ---------- reference drawing ---------- */

const RefRow = styled.div`
  display: flex;
  flex: 1;
  min-height: 0;
  background: #eee;
`;
const RefMain = styled.div`
  display: flex;
  flex: 1;
  flex-direction: column;
  min-width: 0;
`;
const Message = styled.p`
  flex: 0 0 28px;
  margin: 0;
  background: #f2f2f2;
  font-size: 11px;
  line-height: 26px;
  white-space: nowrap;
`;
const SideBar = styled.aside`
  display: flex;
  flex-direction: column;
  align-items: center;
  gap: 4px;
  flex: 0 0 24px;
  padding-top: 8px;
  background: linear-gradient(90deg, #b4b7bf, #9a9da6);
  button { flex: 0 0 auto; }
  hr { width: 13px; margin: 2px 0 3px; border: 0; border-top: 1px solid #eee; }
`;
const DrawingTabs = styled.div`
  display: flex;
  align-items: flex-start;
  gap: 2px;
  flex: 0 0 22px;
  padding: 1px 2px 0;
  background: linear-gradient(#8c8c8c, #666);
`;
const StepButton = styled.button`
  display: flex;
  align-items: center;
  justify-content: center;
  width: 14px;
  height: 14px;
  margin-top: 2px;
  border-right: 1px solid #999;
  background: #ececec;
`;
const DrawingTab = styled.button<{ $color: string; $bold?: boolean }>`
  height: 18px;
  margin-right: -10px;
  padding: 0 18px 0 9px;
  background: linear-gradient(${(p) => p.$color}, #f4f4f4);
  clip-path: polygon(0 0, 100% 0, calc(100% - 14px) 100%, 0 100%);
  font-weight: ${(p) => (p.$bold ? 700 : 400)};
`;
const glyphs = (xs: number[]) => xs.join(" ");

const RefDrawing = () => (
  <svg viewBox="782 207 1112 851" preserveAspectRatio="xMinYMin slice" fill="none" strokeWidth="1" role="img" aria-label="平面図">
    <g stroke="#fff">
      <path d="M863.5 207V683M1893 607.5H1050L1011 675M1085 795.5H1893" />
      <path d="M1085 740.5H1893" strokeDasharray="23 6" />
    </g>
    <path d="M782 740.5H864V760.5H782" stroke="#c4161c" />
    <g stroke="#5fe0d4">
      <path d="M1070 754L1327 1011V1058M1028 796L1268 1036V1058M986 838L1207 1058" />
      <path d="M1893 1037.5H1461L1037 792L1093 814M1037 792L1082 829M1224 1058L1244 1044L1230 1058M1244 1044L1236 1058" />
    </g>
    <path d="M973 633L1081 741L973 849L865 741Z" fill="#006ad6" />
    <path d="M865 741L973 633" stroke="#1020d0" />
    <path d="M973 849L1081 741" stroke="#a01830" />
    <path d="M865 741L973 849" stroke="#20d080" />
    <path d="M973 673L1042 741L973 809L904 741Z" stroke="#1a82ee" />
    <path d="M1011 675L973 741L993 686M973 741L1010 695" stroke="#5fb0ff" />
    <g strokeWidth="1.5">
      <circle cx="973" cy="632" r="3" stroke="#1a1ab8" /><circle cx="864" cy="741" r="3" stroke="#1a1ab8" />
      <circle cx="1082" cy="741" r="3" stroke="#c4161c" /><circle cx="973" cy="850" r="3" stroke="#c4161c" />
    </g>
    <g fill="#fff" fontSize="68" textAnchor="middle">
      <text x={glyphs([1047, 1117, 1204, 1292, 1379, 1485, 1534, 1589, 1643, 1696, 1765, 1836, 1889])} y="441">2号集水桝(B800・L8</text>
      <text x={glyphs([1127, 1213, 1300, 1474, 1545, 1599, 1654, 1706, 1758, 1811])} y="510">天端高▽46.962</text>
      <text x={glyphs([1127, 1213, 1300, 1474, 1545, 1599, 1654, 1706, 1758, 1811])} y="579">床版高▽46.162</text>
    </g>
    <g fill="#00ffff" fontSize="68" textAnchor="middle">
      <text x={glyphs([1627, 1680, 1735, 1787, 1839, 1889])} y="937">46.962</text>
      <text x={glyphs([1578, 1627, 1680, 1735, 1787, 1839, 1889])} y="1005">(46.500</text>
    </g>
  </svg>
);

const steps = ["M3 0v8M9 0v8L5 4z", "M8 0v8L3 4z", "M4 0v8l5-4z", "M9 0v8M3 0v8l4-4z"];

export default function App() {
  return (
    <Window>
      <Global />
      <TitleBar>
        <QuickBar>
          <QuickPill>
            {["newDoc", "open", "save", "logo"].map((n) => <button key={n} aria-label={n}><Icon name={n} /></button>)}
          </QuickPill>
          <QuickMore aria-label="customize"><Arrow /></QuickMore>
        </QuickBar>
        <Title>サンプルデータ.tsx - SiTECH 3D</Title>
        <WinControls>
          <button aria-label="minimize"><svg width="12" height="12"><path d="M1 6.5h10" stroke="#888" /></svg></button>
          <button aria-label="maximize"><svg width="12" height="12"><path d="M1.500 1.500h9v9h-9z" stroke="#888" fill="none" /></svg></button>
          <button aria-label="close"><svg width="12" height="12"><path d="M1 1l10 10M11 1L1 11" stroke="#888" /></svg></button>
        </WinControls>
      </TitleBar>
      <MenuBar>
        <MenuTab>座標管理</MenuTab>
        <MenuTab>平面</MenuTab>
        <MenuTab>縦断</MenuTab>
        <MenuTab $active>横断</MenuTab>
        <MenuTab>ヘルプ</MenuTab>
        <ThemeButton>テーマ<svg width="6" height="4"><path d="M0 0l3 3 3-3" stroke="#fff" fill="none" /></svg></ThemeButton>
      </MenuBar>
      <Orb aria-label="SiTECH 3D">
        <svg width="37" height="37" viewBox="0 0 37 37">
          <circle cx="18" cy="18" r="18" fill="#d9dadd" stroke="#70757c" />
          <circle cx="18" cy="18" r="15" fill="#f4f4f6" />
          <path d="M7 10h21v21H7z" fill="#b80d12" />
          <path d="M28 12L11 17l15 2-16 5 15 1-15 5" stroke="#ee6a62" strokeWidth="1.500" fill="none" />
        </svg>
      </Orb>

      <Ribbon>
        <GroupBox $w={283}>
          <GroupBody>
            <FieldStack>
              <FieldLine>
                <FieldLabel htmlFor="section">横断</FieldLabel>
                <Combo><select id="section"><option>2号集水桝</option></select><Arrow /></Combo>
                <SplitButton aria-label="edit section"><Icon name="pencil" size={14} /><Arrow /></SplitButton>
              </FieldLine>
              <FieldLine>
                <FieldLabel htmlFor="station">測点</FieldLabel>
                <Combo $fixed={115} $small><select id="station"><option>2SNo.0+0.800 [EP]</option></select><Arrow /></Combo>
                <SplitButton aria-label="add station"><Icon name="plus" /><Arrow /></SplitButton>
                <NavStrip>
                  {["first", "prev", "next", "last"].map((n) => <button key={n} aria-label={n}><Icon name={n} size={14} /></button>)}
                </NavStrip>
              </FieldLine>
            </FieldStack>
          </GroupBody>
          <GroupName>横断情報</GroupName>
        </GroupBox>
        <GroupBox $w={212}>
          <GroupBody>
            <FieldStack>
              <FieldLine>
                <FieldLabel htmlFor="plan">計画</FieldLabel>
                <Combo><select id="plan"><option>集水桝</option></select><Arrow /></Combo>
                <SplitButton aria-label="edit plan"><Icon name="pencil" size={14} /><Arrow /></SplitButton>
              </FieldLine>
              <FieldLine>
                <FieldLabel htmlFor="present">現況</FieldLabel>
                <Combo><select id="present" defaultValue=""><option value="" /></select><Arrow /></Combo>
                <SplitButton aria-label="edit present"><Icon name="pencil" size={14} /><Arrow /></SplitButton>
              </FieldLine>
            </FieldStack>
          </GroupBody>
          <GroupName>構築形状</GroupName>
        </GroupBox>
        {groups.map((g) => (
          <GroupBox key={g.name} $w={g.w}>
            <GroupBody>{g.items.map((c) => <Command key={c.l1} {...c} />)}</GroupBody>
            <GroupName>{g.name}</GroupName>
          </GroupBox>
        ))}
        <GroupBox $w={91}>
          <GroupBody>
            <ToolList>
              <button><Icon name="gear" />設定<Arrow /></button>
              <button><Icon name="calc" />土木計算<Arrow /></button>
              <button><Icon name="windows" />ウィンドウ<Arrow /></button>
            </ToolList>
          </GroupBody>
          <GroupName>ツール</GroupName>
        </GroupBox>
      </Ribbon>

      <Workspace>
        <LeftColumn>
          <FormPane>
            <FormBody>
              <Fieldset $w="506px" $pad="1px 0 7px">
                <legend>路線情報</legend>
                <RouteLine>
                  <Label htmlFor="hLine">平面線形</Label>
                  <Field id="hLine" $w={167} defaultValue="2号集水桝" readOnly />
                  <Label htmlFor="vLine" $w={71} $indent={19}>縦断線形</Label>
                  <Field id="vLine" $w={167} defaultValue="2号集水桝" readOnly />
                </RouteLine>
              </Fieldset>
              <StationLine>
                <Label htmlFor="st1" $w={48}>測点名</Label>
                <Field id="st1" $w={145} defaultValue="2SNo.0+0.800" readOnly />
                <Field aria-label="測点名 2" $w={145} defaultValue="EP" readOnly />
                <Field aria-label="測点名 3" $w={145} readOnly />
                <PushButton $w={61}>編集</PushButton>
              </StationLine>
              <FormGrid>
                <Label htmlFor="dist">追加距離</Label>
                <Field id="dist" $w={70} $right defaultValue="0.800" readOnly />
                <span />
                <Label htmlFor="fh">計画高(FH)</Label>
                <Field id="fh" $w={70} $right defaultValue="46.962" readOnly />
                <span />
                <Label htmlFor="gh" $indent={5}>地盤高(GH)</Label>
                <Field id="gh" $w={70} $right $blank />
                <Label htmlFor="cl">離れ(CL±)</Label>
                <Field id="cl" $w={70} $right defaultValue="0.000" readOnly />
                <span />
                <Label htmlFor="dh">比高(FH±)</Label>
                <Field id="dh" $w={70} $right defaultValue="0.000" readOnly />
                <span />
                <ButtonCell><PushButton $w={104}>離れ・比高編集</PushButton></ButtonCell>
              </FormGrid>
              <TabLine>
                <TabList>
                  <SheetTab $active><Icon name="tabPlan" />計画断面</SheetTab>
                  <SheetTab><Icon name="tabNow" />現況断面</SheetTab>
                </TabList>
                <PushButton $w={104}>横断属性設定</PushButton>
              </TabLine>
              <TabPage>
                <Fieldset $pad="5px 8px 7px">
                  <legend>左側</legend>
                  <GridFrame $h={80}><DataGrid rows={leftRows} cursor name="左側" /></GridFrame>
                </Fieldset>
                <Fieldset $pad="5px 8px 7px">
                  <legend>右側</legend>
                  <GridFrame $h={82}><DataGrid rows={rightRows} name="右側" /><GridScroll /></GridFrame>
                </Fieldset>
              </TabPage>
            </FormBody>
            <PaneScroll />
            <Pointer width="14" height="20" viewBox="0 0 14 20"><path d="M1 1v15l4-3 3 6 2-1-3-6h5z" fill="#fff" stroke="#444" /></Pointer>
          </FormPane>

          <ViewPane>
            <PaneHead><h2>3 D</h2><Pin /><Cross /></PaneHead>
            <Toolbar $h={27}>
              <Tools list="fit zoom | undoX undo undoStar | bulb tools width cross v house !layerBulb ipBulb v !ipRed waves v box v wire v | dim v film v !filmBulb sheetRed v cube v globe | stackX" />
            </Toolbar>
            <Stage $m="1px 3px 3px"><Scene3D /></Stage>
          </ViewPane>

          <ViewTabs>
            <ViewTab><Icon name="plan" />平面</ViewTab>
            <ViewTab><Icon name="profile" />縦断</ViewTab>
            <ViewTab><Icon name="xsec" />横断</ViewTab>
            <ViewTab $active><Icon name="cube" />3 D</ViewTab>
          </ViewTabs>
        </LeftColumn>

        <RightColumn>
          <PaneHead><h2>参照図面 【 平面図.SFC】</h2><Pin /><Cross /></PaneHead>
          <Toolbar $h={24}>
            <Tools list="folder folderUp docX docZoom save v saveWeb | !plan profile xsec help toolDoc | link | !docIn | layers" />
            <Combo $light $fixed={147}>
              <select aria-label="シート"><option>新規シート1 (1/100)</option></select><Arrow />
            </Combo>
            <Tools list="!grid note sheet calcDoc windows | select v pick v | board" />
          </Toolbar>
          <RefRow>
            <RefMain>
              <Message>【横断構成点確認】横断線のクリックでカレント横断測点を切替えます&nbsp; [右クリック-OK]で作図終了、[右クリック-終了]で終了</Message>
              <Stage $m="1px 3px 0 2px"><RefDrawing /></Stage>
            </RefMain>
            <SideBar>
              {["linePen", "dim", ">", "abc", "-", "bulbLayers", "bulbPick", "-", "checkPlus", ">", "checkLayers", "-", "eraser", "cut", "broom", "letterPen"].map((n, i) =>
                n === "-" ? <hr key={i} /> :
                n === ">" ? <button key={i} aria-label="more"><svg width="4" height="8"><path d="M0 0v8l4-4z" fill="#55585e" /></svg></button> :
                <button key={i} aria-label={n}><Icon name={n} /></button>
              )}
            </SideBar>
          </RefRow>
          <DrawingTabs>
            {steps.map((d) => (
              <StepButton key={d} aria-label="sheet step"><svg width="12" height="8"><path d={d} fill="#333" stroke="#333" /></svg></StepButton>
            ))}
            <DrawingTab $color="#74e874" $bold>平面図.SFC</DrawingTab>
            <DrawingTab $color="#f4bcbc">展開図・構造図.sfc</DrawingTab>
          </DrawingTabs>
        </RightColumn>
      </Workspace>
    </Window>
  );
}
